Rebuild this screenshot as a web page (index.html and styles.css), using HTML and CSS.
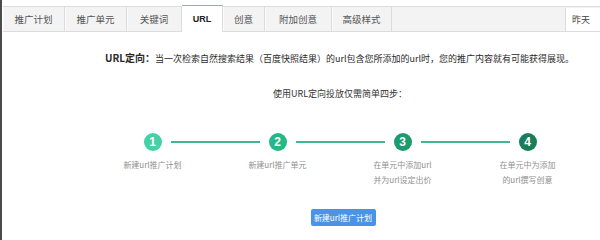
FILE: index.html
```html
<!DOCTYPE html>
<html lang="zh-CN">
<head>
    <meta charset="UTF-8">
    <meta name="viewport" content="width=device-width, initial-scale=1.0">
    <title>URL定向</title>
    <link rel="stylesheet" href="styles.css">
</head>
<body>
    <div class="tab-bar">
        <div class="tab">推广计划</div>
        <div class="tab">推广单元</div>
        <div class="tab tab-kw">关键词</div>
        <div class="tab tab-active">URL</div>
        <div class="tab tab-idea">创意</div>
        <div class="tab tab-extra">附加创意</div>
        <div class="tab tab-style">高级样式</div>
        <div class="tab-spacer"></div>
        <div class="date-box">昨天</div>
    </div>

    <div class="content">
        <p class="intro"><b>URL定向：</b>当一次检索自然搜索结果（百度快照结果）的url包含您所添加的url时，您的推广内容就有可能获得展现。</p>
        <p class="subtitle">使用URL定向投放仅需简单四步：</p>

        <div class="step-track">
            <span class="step-num num-1">1</span>
            <span class="step-line"></span>
            <span class="step-num num-2">2</span>
            <span class="step-line"></span>
            <span class="step-num num-3">3</span>
            <span class="step-line"></span>
            <span class="step-num num-4">4</span>
        </div>

        <div class="step-labels">
            <div class="step-label">新建url推广计划</div>
            <div class="step-label">新建url推广单元</div>
            <div class="step-label">在单元中添加url<br>并为url设定出价</div>
            <div class="step-label">在单元中为添加<br>的url撰写创意</div>
        </div>

        <button class="create-btn">新建url推广计划</button>
    </div>
</body>
</html>
```

FILE: styles.css
```css
*,
*::before,
*::after {
    box-sizing: border-box;
}

:root {
    --clr-border: #dcdcdc;
    --clr-tab: #f3f3f3;
    --clr-text: #333333;
    --clr-muted: #909090;
    --clr-line: #3db88f;
    --clr-blue: #4a93e6;

    --ff-body: "Noto Sans CJK SC", "Noto Sans", sans-serif;
}

body {
    margin: 0;
    height: 240px;
    overflow: hidden;
    background: #ffffff;
    border-left: 2px solid #4b4b4b;
    color: var(--clr-text);
    font-family: var(--ff-body);
}

/* tabs */

.tab-bar {
    display: flex;
    height: 26px;
    margin-top: 6px;
    margin-left: 1px;
    background: var(--clr-tab);
    border-top: 1px solid var(--clr-border);
    border-bottom: 1px solid var(--clr-border);
}

.tab {
    width: 62px;
    display: flex;
    align-items: center;
    justify-content: center;
    border-right: 1px solid var(--clr-border);
    box-shadow: inset 1px 0 0 #fbfbfb;
    font-size: 9.5px;
    color: #555555;
}

.tab-kw {
    width: 55px;
}

.tab-active {
    width: 41px;
    margin-top: -2px;
    margin-bottom: -1px;
    background: #ffffff;
    border-top: 1px solid #9aa6b4;
    box-shadow: none;
    font-weight: 700;
    font-family: "Liberation Sans", sans-serif;
    font-size: 9px;
    color: #222222;
}

.tab-idea {
    width: 42px;
}

.tab-extra {
    width: 67px;
}

.tab-style {
    width: 60px;
}

.tab-spacer {
    flex: 1;
}

.date-box {
    width: 35px;
    margin-top: 1px;
    padding-left: 6px;
    display: flex;
    align-items: center;
    background: #ffffff;
    border-left: 1px solid var(--clr-border);
    font-size: 9px;
    color: #444444;
}

/* content */

.content {
    width: 470px;
    margin-left: 103px;
    display: flex;
    flex-direction: column;
    align-items: center;
}

.intro {
    margin: 19px 0 0;
    width: 100%;
    font-size: 9px;
    line-height: 14px;
    white-space: nowrap;
    color: #2a2a2a;
}

.intro b {
    font-size: 10px;
}

.subtitle {
    margin: 21px 0 0;
    font-size: 9px;
    line-height: 14px;
    color: #333333;
}

.step-track {
    display: flex;
    align-items: center;
    margin-top: 32px;
}

.step-num {
    width: 18px;
    height: 18px;
    border-radius: 50%;
    display: flex;
    align-items: center;
    justify-content: center;
    color: #ffffff;
    font-family: "Liberation Sans", sans-serif;
    font-weight: 700;
    font-size: 12px;
}

.num-1 {
    background: #45d0a6;
}

.num-2 {
    background: #23b886;
}

.num-3 {
    background: #1c9b6e;
}

.num-4 {
    background: #177e59;
}

.step-line {
    width: 89px;
    height: 2px;
    margin: 0 9px;
    background: var(--clr-line);
}

.step-labels {
    display: grid;
    grid-template-columns: repeat(4, 125px);
    margin-top: 6px;
}

.step-label {
    text-align: center;
    font-size: 8px;
    line-height: 15px;
    color: var(--clr-muted);
}

.create-btn {
    margin-top: 22px;
    margin-left: 6px;
    width: 65px;
    height: 17px;
    padding: 0;
    border: none;
    border-radius: 2px;
    background: var(--clr-blue);
    color: #ffffff;
    font-family: var(--ff-body);
    font-size: 8px;
}
```
